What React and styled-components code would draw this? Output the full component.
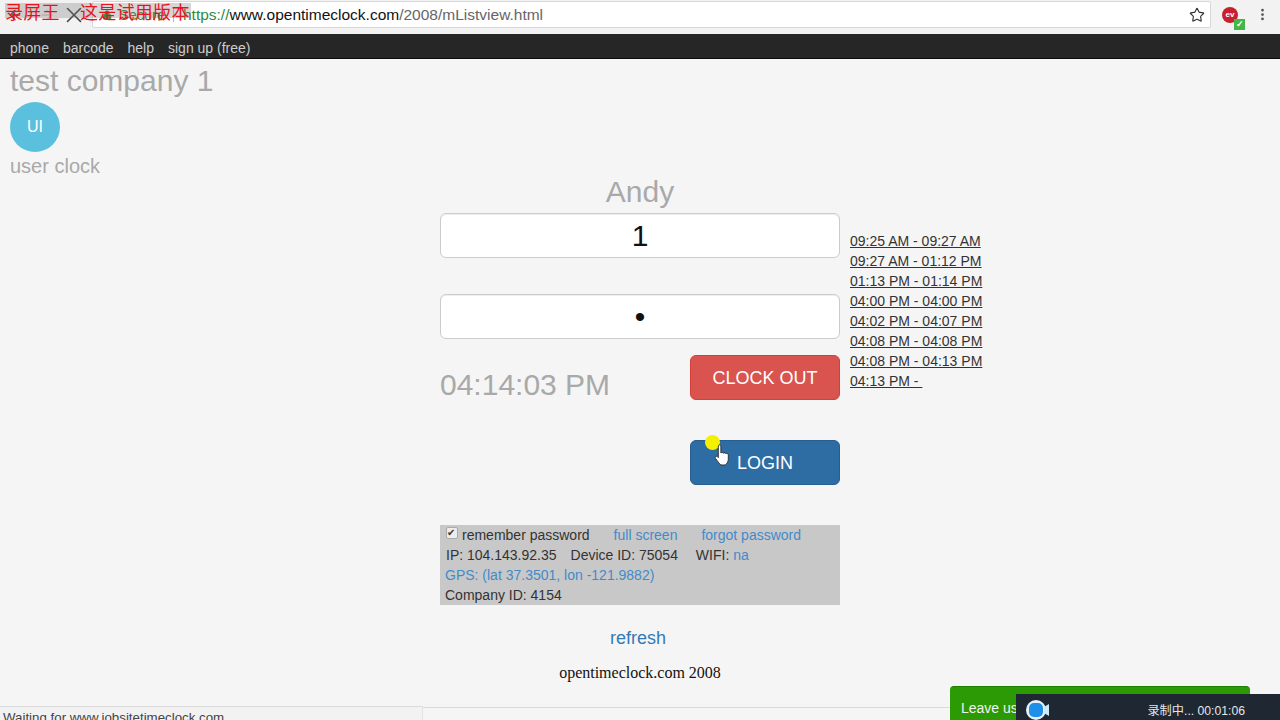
import React from 'react';
import styled, { createGlobalStyle } from 'styled-components';
import { Star, X, ArrowLeft, ArrowRight, Lock, MoreVertical } from 'lucide-react';

const GlobalStyle = createGlobalStyle`
  html, body {
    margin: 0;
    height: 720px;
    overflow: hidden;
    background: #f5f5f5;
    font-family: "Liberation Sans", Arial, sans-serif;
    color: #333;
  }
`;

const Page = styled.div`
  position: relative;
  width: 1280px;
  height: 720px;
  overflow: hidden;
`;

/* browser toolbar */
const Toolbar = styled.div`
  height: 34px;
  background: #f2f2f2;
  display: flex;
  align-items: flex-start;
  padding-top: 1px;
  box-sizing: border-box;
`;

const NavIcons = styled.div`
  width: 92px;
  height: 27px;
  display: flex;
  align-items: center;
  gap: 16px;
  padding-left: 7px;
  box-sizing: border-box;
  color: #444;
  flex: none;

  svg:last-child {
    margin-left: -10px;
  }
`;

const UrlBox = styled.div`
  width: 1119px;
  height: 27px;
  background: #fff;
  border: 1px solid #d8d8d8;
  border-radius: 2px;
  box-sizing: border-box;
  display: flex;
  align-items: center;
  padding: 0 5px 0 9px;
  font-size: 15.5px;
  color: #444;
  flex: none;
`;

const Secure = styled.span`
  display: flex;
  align-items: center;
  gap: 7px;
  font-size: 14.5px;
  color: #2e8b3d;
`;

const Divider = styled.span`
  width: 1px;
  height: 14px;
  background: #bbb;
  margin: 0 9px 0 8px;
`;

const Https = styled.span`
  color: #2e8b3d;
`;

const UrlHost = styled.span`
  color: #111;
`;

const UrlPath = styled.span`
  color: #666;
`;

const StarWrap = styled.span`
  margin-left: auto;
  display: flex;
  color: #333;
`;

const Extensions = styled.div`
  flex: 1;
  height: 27px;
  display: flex;
  align-items: center;
  justify-content: space-between;
  padding: 0 10px 0 11px;
  color: #555;
`;

const ExtBadge = styled.div`
  position: relative;
  width: 16px;
  height: 16px;
  border-radius: 50%;
  background: #c8202f;
  color: #fff;
  font-size: 8px;
  font-weight: bold;
  line-height: 16px;
  text-align: center;
`;

const ExtCheck = styled.span`
  position: absolute;
  right: -7px;
  bottom: -7px;
  width: 11px;
  height: 11px;
  background: #43b649;
  color: #fff;
  font-size: 9px;
  line-height: 11px;
`;

/* site nav */
const SiteNav = styled.nav`
  height: 25px;
  background: #262626;
  border-bottom: 1px solid #080808;
  box-sizing: border-box;
  display: flex;
  align-items: center;
  gap: 14px;
  padding: 3px 0 0 10px;
  font-size: 14px;
  color: #ccc;
`;

const CompanyBlock = styled.div`
  padding-left: 10px;
  height: 117px;
  color: #a9a9a9;
`;

const CompanyName = styled.div`
  font-size: 30px;
  line-height: 43px;
`;

const Avatar = styled.div`
  width: 50px;
  height: 50px;
  border-radius: 50%;
  background: #5bc0de;
  color: #fff;
  font-size: 16px;
  display: flex;
  align-items: center;
  justify-content: center;
`;

const UserLabel = styled.div`
  font-size: 20px;
  line-height: 28px;
`;

const ClockArea = styled.div`
  display: flex;
  padding-left: 440px;
`;

const MainColumn = styled.div`
  width: 400px;
  flex: none;
`;

const Name = styled.div`
  font-size: 30px;
  line-height: 30px;
  text-align: center;
  color: #a9a9a9;
  height: 30px;
  padding-top: 1px;
  margin-bottom: 6px;
`;

const Field = styled.input`
  display: block;
  width: 400px;
  height: 45px;
  margin-bottom: ${(p) => p.$gap}px;
  border: 1px solid #ccc;
  border-radius: 6px;
  box-sizing: border-box;
  background: #fff;
  box-shadow: inset 0 1px 1px rgba(0, 0, 0, 0.075);
  text-align: center;
  font-family: "Liberation Sans", Arial, sans-serif;
  font-size: 30px;
  color: #111;
  outline: none;
`;

const ActionRow = styled.div`
  display: flex;
  justify-content: space-between;
  align-items: flex-start;
  margin-bottom: ${(p) => p.$gap}px;
`;

const Time = styled.div`
  font-size: 30px;
  line-height: 30px;
  color: #a9a9a9;
  margin-top: 15px;
`;

const ActionButton = styled.button`
  width: 150px;
  height: 45px;
  margin-left: auto;
  padding: 2px 0 0;
  border: 1px solid ${(p) => p.$border};
  border-radius: 6px;
  background: ${(p) => p.$bg};
  color: #fff;
  font-family: "Liberation Sans", Arial, sans-serif;
  font-size: 18px;
`;

const InfoPanel = styled.div`
  height: 80px;
  background: #c9c8c8;
  font-size: 14px;
  line-height: 20px;
  color: #333;
  box-sizing: border-box;
  padding-left: 5px;
`;

const InfoRow = styled.div`
  display: flex;
  gap: ${(p) => p.$gap || 0}px;
  padding-left: ${(p) => p.$indent || 0}px;
  height: 20px;
  align-items: center;
`;

const Remember = styled.span`
  display: flex;
  align-items: center;
  gap: 5px;
`;

const Check = styled.input`
  appearance: none;
  position: relative;
  width: 12px;
  height: 12px;
  margin: 0 -1px 4px 1px;
  background: #ececec;
  border: 1px solid #aaa;
  border-radius: 2px;
  box-sizing: border-box;

  &::after {
    content: '✔';
    position: absolute;
    left: 0;
    top: -2px;
    font-size: 10px;
    line-height: 13px;
    color: #333;
  }
`;

const A = styled.a`
  color: #428bca;
`;

const Refresh = styled.div`
  text-align: center;
  font-size: 18px;
  color: #337ab7;
  padding: 22px 4px 0 0;
  line-height: 22px;
`;

const Footer = styled.div`
  text-align: center;
  font-family: "Liberation Serif", "Times New Roman", serif;
  font-size: 16px;
  color: #111;
  margin-top: 14px;
  line-height: 20px;
`;

const Shifts = styled.div`
  margin: 55px 0 0 10px;
  font-size: 14px;
  line-height: 20px;
  color: #333;
`;

const Shift = styled.div`
  text-decoration: underline;
  white-space: pre;
`;

/* overlays on top of the page */
const Watermark = styled.div`
  position: absolute;
  left: 5px;
  top: 3px;
  width: 186px;
  height: 15px;
  background: rgba(120, 120, 120, 0.3);
  color: #e8141c;
  font-family: "Noto Sans CJK SC", sans-serif;
  font-size: 18px;
  letter-spacing: 0.3px;
  line-height: 17px;
  white-space: pre;
`;

const WatermarkGap = styled.span`
  display: inline-block;
  width: 20px;
`;

const CursorDot = styled.div`
  position: absolute;
  left: 705px;
  top: 435px;
  width: 15px;
  height: 15px;
  border-radius: 50%;
  background: #f5f000;
`;

const Pointer = styled.svg`
  position: absolute;
  left: 714px;
  top: 444px;
`;

const StatusBubble = styled.div`
  position: absolute;
  left: 0;
  bottom: 0;
  width: 423px;
  height: 14px;
  background: #f2f2f2;
  border-top: 1px solid #dcdcdc;
  border-right: 1px solid #e4e4e4;
  box-sizing: border-box;
  padding: 3px 0 0 3px;
  font-size: 13.3px;
  line-height: 15px;
  color: #444;
  overflow: hidden;
`;

const StatusLine = styled.div`
  position: absolute;
  left: 423px;
  right: 0;
  top: 707px;
  height: 1px;
  background: #d9d9d9;
`;

const LeaveUs = styled.div`
  position: absolute;
  left: 950px;
  top: 686px;
  width: 300px;
  height: 34px;
  background: #2b9a05;
  border-radius: 4px 4px 0 0;
  border-top: 1px solid #1f8000;
  box-sizing: border-box;
  padding: 13px 0 0 11px;
  color: #f2f2f2;
  font-size: 14px;
  line-height: 17px;
`;

const Recorder = styled.div`
  position: absolute;
  left: 1016px;
  top: 694px;
  width: 264px;
  height: 26px;
  background: #1f2733;
  display: flex;
  align-items: center;
  padding: 5px 35px 0 10px;
  box-sizing: border-box;
  color: #e4e6e8;
  font-family: "Liberation Sans", "Noto Sans CJK SC", sans-serif;
  font-size: 12.2px;
`;

const RecLabel = styled.span`
  margin-left: auto;
`;

const shifts = [
  '09:25 AM - 09:27 AM',
  '09:27 AM - 01:12 PM',
  '01:13 PM - 01:14 PM',
  '04:00 PM - 04:00 PM',
  '04:02 PM - 04:07 PM',
  '04:08 PM - 04:08 PM',
  '04:08 PM - 04:13 PM',
  '04:13 PM - ',
];

const App = () => (
  <Page>
    <GlobalStyle />
    <Toolbar>
      <NavIcons>
        <ArrowLeft size={16} />
        <ArrowRight size={16} color="#c9c9c9" />
        <X size={26} strokeWidth={1.5} />
      </NavIcons>
      <UrlBox>
        <Secure>
          <Lock size={10} fill="#2e8b3d" />
          Secure
        </Secure>
        <Divider />
        <Https>https://</Https>
        <UrlHost>www.opentimeclock.com</UrlHost>
        <UrlPath>/2008/mListview.html</UrlPath>
        <StarWrap>
          <Star size={16} strokeWidth={1.7} />
        </StarWrap>
      </UrlBox>
      <Extensions>
        <ExtBadge>
          ev
          <ExtCheck>✓</ExtCheck>
        </ExtBadge>
        <MoreVertical size={15} strokeWidth={2.4} />
      </Extensions>
    </Toolbar>
    <SiteNav>
      <span>phone</span>
      <span>barcode</span>
      <span>help</span>
      <span>sign up (free)</span>
    </SiteNav>
    <CompanyBlock>
      <CompanyName>test company 1</CompanyName>
      <Avatar>UI</Avatar>
      <UserLabel>user clock</UserLabel>
    </CompanyBlock>
    <ClockArea>
      <MainColumn>
        <Name>Andy</Name>
        <Field readOnly value="1" $gap={36} />
        <Field readOnly type="password" value="1" $gap={16} />
        <ActionRow $gap={40}>
          <Time>04:14:03 PM</Time>
          <ActionButton $bg="#d9534f" $border="#d43f3a">CLOCK OUT</ActionButton>
        </ActionRow>
        <ActionRow $gap={40}>
          <ActionButton $bg="#2e6da4" $border="#285e8e">LOGIN</ActionButton>
        </ActionRow>
        <InfoPanel>
          <InfoRow $gap={24}>
            <Remember>
              <Check type="checkbox" readOnly checked />
              remember password
            </Remember>
            <A>full screen</A>
            <A>forgot password</A>
          </InfoRow>
          <InfoRow $indent={1} $gap={14}>
            <span>IP: 104.143.92.35</span>
            <span>Device ID: 75054</span>
            <span>
              &nbsp;WIFI: <A>na</A>
            </span>
          </InfoRow>
          <InfoRow>
            <A>GPS: (lat 37.3501, lon -121.9882)</A>
          </InfoRow>
          <InfoRow>Company ID: 4154</InfoRow>
        </InfoPanel>
        <Refresh>refresh</Refresh>
        <Footer>opentimeclock.com 2008</Footer>
      </MainColumn>
      <Shifts>
        {shifts.map((s) => (
          <Shift key={s}>{s}</Shift>
        ))}
      </Shifts>
    </ClockArea>

    <Watermark>
      录屏王<WatermarkGap />这是试用版本
    </Watermark>
    <CursorDot />
    <Pointer width="16" height="22" viewBox="0 0 15 21">
      <path
        d="M4 2c0-1.6 2.4-1.6 2.4 0V8.5l1-.3c.6-.2 1.2.1 1.4.5l1-.2c.6-.1 1.1.2 1.3.6l.8-.1c.9 0 1.6.6 1.6 1.5v4c0 2.2-1.2 4.5-3 5.5H6.5C5 19 3 16 1.2 13.6c-.9-1.3.7-2.6 1.8-1.6l1 1V2z"
        fill="#fff"
        stroke="#222"
        strokeWidth="0.8"
      />
    </Pointer>
    <StatusLine />
    <StatusBubble>Waiting for www.jobsitetimeclock.com...</StatusBubble>
    <LeaveUs>Leave us a message</LeaveUs>
    <Recorder>
      <svg width="24" height="20" viewBox="0 0 24 20">
        <circle cx="10" cy="10" r="10" fill="#e4f3fb" />
        <rect x="3" y="3" width="14" height="14" rx="5" fill="#1f8fe8" />
        <path d="M18 7l5-3v12l-5-3z" fill="#cfe9f8" />
      </svg>
      <RecLabel>录制中... 00:01:06</RecLabel>
    </Recorder>
  </Page>
);

export default App;
